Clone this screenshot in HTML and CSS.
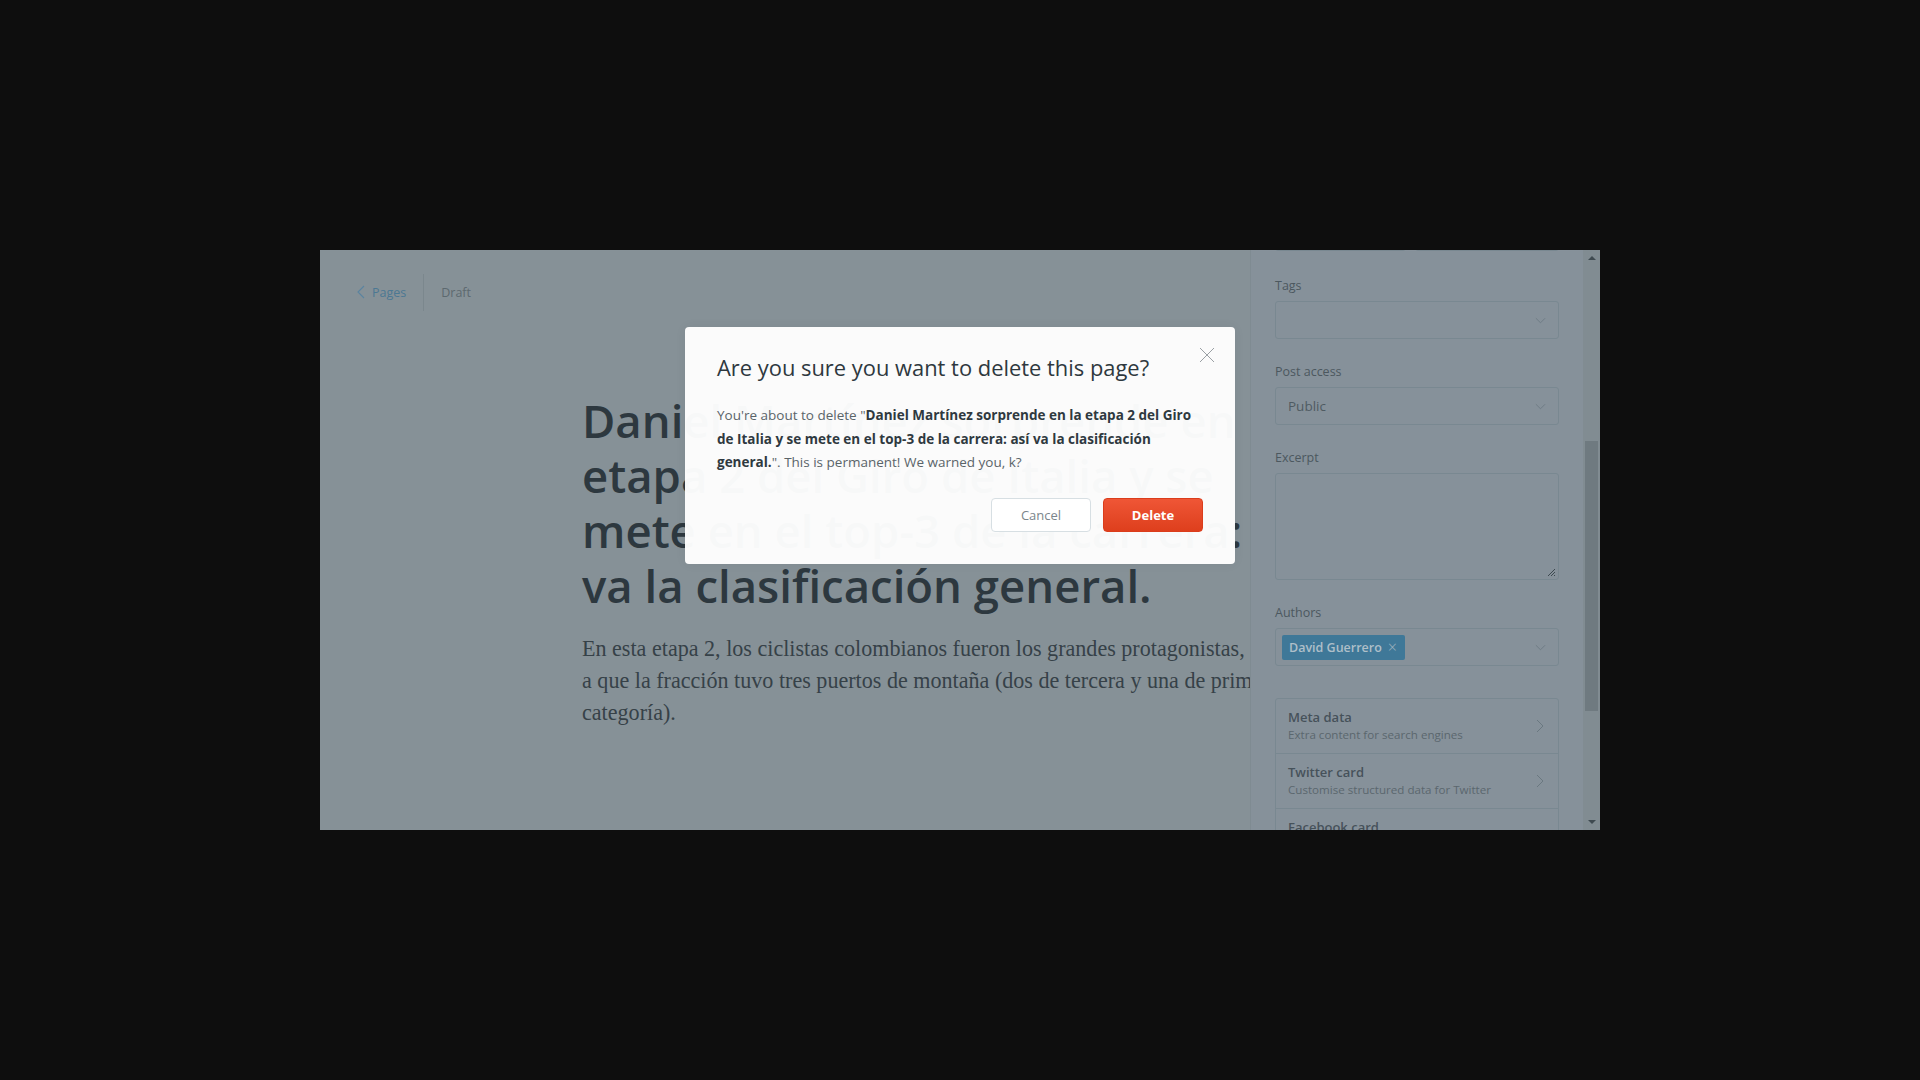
FILE: index.html
```html
<!DOCTYPE html>
<html lang="es">
<head>
<meta charset="utf-8">
<title>Delete page</title>
<link rel="stylesheet" href="styles.css">
</head>
<body>
<div class="stage">
  <div class="window">
    <main class="editor">
      <nav class="crumbs">
        <a class="crumb-back" href="#">
          <svg class="crumb-chevron" viewBox="0 0 8 14" width="8" height="14"><path d="M7 1 1 7l6 6" fill="none" stroke="currentColor" stroke-width="1.1"/></svg>
          Pages
        </a>
        <span class="crumb-sep"></span>
        <span class="crumb-status">Draft</span>
      </nav>
      <article class="post">
        <h1 class="post-title">Daniel Martínez sorprende en la etapa 2 del Giro de Italia y se mete en el top-3 de la carrera: así va la clasificación general.</h1>
        <p class="post-body">En esta etapa 2, los ciclistas colombianos fueron los grandes protagonistas, debido a que la fracción tuvo tres puertos de montaña (dos de tercera y una de primera categoría).</p>
      </article>
    </main>

    <aside class="settings">
      <div class="settings-scroll">
        <div class="date-row">
          <div class="input input-date"></div>
          <div class="input input-time"></div>
        </div>

        <div class="field">
          <label class="field-label">Tags</label>
          <div class="input select">
            <span class="select-value"></span>
            <svg class="select-caret" viewBox="0 0 12 7" width="11" height="7"><path d="M1 1l5 5 5-5" fill="none" stroke="currentColor" stroke-width="1"/></svg>
          </div>
        </div>

        <div class="field">
          <label class="field-label">Post access</label>
          <div class="input select">
            <span class="select-value">Public</span>
            <svg class="select-caret" viewBox="0 0 12 7" width="11" height="7"><path d="M1 1l5 5 5-5" fill="none" stroke="currentColor" stroke-width="1"/></svg>
          </div>
        </div>

        <div class="field">
          <label class="field-label">Excerpt</label>
          <div class="input textarea">
            <svg class="resize-grip" viewBox="0 0 9 9" width="9" height="9"><path d="M8 1 1 8M8 4 4 8M8 7 7 8" fill="none" stroke="currentColor" stroke-width="1"/></svg>
          </div>
        </div>

        <div class="field">
          <label class="field-label">Authors</label>
          <div class="input select authors">
            <span class="chip">David Guerrero <span class="chip-x">×</span></span>
            <svg class="select-caret" viewBox="0 0 12 7" width="11" height="7"><path d="M1 1l5 5 5-5" fill="none" stroke="currentColor" stroke-width="1"/></svg>
          </div>
        </div>

        <ul class="nav-list">
          <li class="nav-item">
            <div class="nav-text">
              <span class="nav-title">Meta data</span>
              <span class="nav-sub">Extra content for search engines</span>
            </div>
            <svg class="nav-arrow" viewBox="0 0 8 14" width="8" height="14"><path d="M1 1l6 6-6 6" fill="none" stroke="currentColor" stroke-width="1"/></svg>
          </li>
          <li class="nav-item">
            <div class="nav-text">
              <span class="nav-title">Twitter card</span>
              <span class="nav-sub">Customise structured data for Twitter</span>
            </div>
            <svg class="nav-arrow" viewBox="0 0 8 14" width="8" height="14"><path d="M1 1l6 6-6 6" fill="none" stroke="currentColor" stroke-width="1"/></svg>
          </li>
          <li class="nav-item">
            <div class="nav-text">
              <span class="nav-title">Facebook card</span>
              <span class="nav-sub">Customise Open Graph data</span>
            </div>
            <svg class="nav-arrow" viewBox="0 0 8 14" width="8" height="14"><path d="M1 1l6 6-6 6" fill="none" stroke="currentColor" stroke-width="1"/></svg>
          </li>
        </ul>
      </div>
      <div class="scrollbar">
        <span class="sb-arrow sb-up"></span>
        <div class="sb-track"><div class="sb-thumb"></div></div>
        <span class="sb-arrow sb-down"></span>
      </div>
    </aside>

    <div class="overlay">
      <div class="modal" role="dialog">
        <button class="modal-close" aria-label="Close">
          <svg viewBox="0 0 16 16" width="16" height="16"><path d="M1 1l14 14M15 1 1 15" fill="none" stroke="currentColor" stroke-width="1"/></svg>
        </button>
        <h2 class="modal-title">Are you sure you want to delete this page?</h2>
        <p class="modal-body">You're about to delete "<strong>Daniel Martínez sorprende en la etapa 2 del Giro de Italia y se mete en el top-3 de la carrera: así va la clasificación general.</strong>". This is permanent! We warned you, k?</p>
        <div class="modal-actions">
          <button class="btn btn-cancel">Cancel</button>
          <button class="btn btn-delete">Delete</button>
        </div>
      </div>
    </div>
  </div>
</div>
</body>
</html>
```

FILE: styles.css
```css
* { box-sizing: border-box; }

html, body {
  margin: 0;
  padding: 0;
}

body {
  background: #0e0e0e;
  font-family: "Open Sans", "Noto Sans", sans-serif;
}

.stage {
  height: 1080px;
  display: flex;
  align-items: center;
  justify-content: center;
}

.window {
  position: relative;
  width: 1280px;
  height: 580px;
  overflow: hidden;
  display: flex;
  background: #869197;
}

/* ---------- editor ---------- */
.editor {
  flex: 0 0 930px;
  width: 930px;
  background: #869197;
  position: relative;
}

.crumbs {
  display: flex;
  align-items: center;
  height: 38px;
  margin-top: 23px;
  padding-left: 37px;
}

.crumb-back {
  display: flex;
  align-items: center;
  gap: 7px;
  color: #4c7893;
  text-decoration: none;
  font-size: 12.5px;
  padding-right: 17px;
}

.crumb-chevron { color: #5a84a0; }

.crumb-sep {
  width: 1px;
  height: 37px;
  background: #7b878d;
}

.crumb-status {
  color: #5d696f;
  font-size: 12.5px;
  padding-left: 17px;
}

.post {
  width: 740px;
  margin-left: 262px;
  margin-top: 82px;
}

.post-title {
  margin: 0;
  width: 755px;
  font-size: 45.5px;
  line-height: 55px;
  font-weight: 600;
  letter-spacing: 0;
  color: #2d383f;
}

.post-body {
  margin: 20px 0 0;
  font-family: "Liberation Serif", "Times New Roman", serif;
  font-size: 22.1px;
  line-height: 32px;
  color: #364148;
}

/* ---------- settings sidebar ---------- */
.settings {
  position: relative;
  z-index: 1;
  flex: 0 0 350px;
  display: flex;
  background: #86919a;
  border-left: 1px solid #7f8b92;
}

.settings-scroll {
  flex: 1;
  padding: 0 24px;
}

.date-row {
  display: flex;
  gap: 9px;
  margin-top: -37px;
  margin-bottom: 26px;
}

.input {
  height: 38px;
  border: 1px solid #798891;
  border-radius: 3px;
}

.input-date { flex: 0 0 131px; }
.input-time { flex: 1; }

.field { margin-bottom: 24px; }

.field-label {
  display: block;
  font-size: 12.5px;
  line-height: 18px;
  color: #4c585f;
  margin-bottom: 6px;
}

.select {
  display: flex;
  align-items: center;
  padding: 0 12px;
}

.select-value {
  flex: 1;
  font-size: 13.5px;
  color: #4f5b62;
}

.select-caret {
  color: #6d7b83;
}

.textarea {
  height: 107px;
  position: relative;
}

.resize-grip {
  position: absolute;
  right: 2px;
  bottom: 2px;
  color: #3d4950;
}

.authors { padding-left: 6px; }

.chip {
  display: inline-flex;
  align-items: center;
  gap: 6px;
  height: 25px;
  padding: 0 8px 0 7px;
  background: #3f7898;
  border-radius: 2px;
  color: #aebfc9;
  font-size: 12.5px;
  font-weight: 600;
  margin-right: auto;
}

.chip-x {
  font-weight: 300;
  font-size: 16px;
  color: #9fb3bf;
}

.nav-list {
  list-style: none;
  margin: 32px 0 0;
  padding: 0;
  border: 1px solid #798891;
  border-radius: 3px;
}

.nav-item {
  display: flex;
  align-items: center;
  height: 55px;
  padding: 0 12px 0 12px;
  border-bottom: 1px solid #798891;
}

.nav-text {
  flex: 1;
  display: flex;
  flex-direction: column;
}

.nav-title {
  font-size: 13px;
  font-weight: 600;
  color: #46525a;
  line-height: 17px;
}

.nav-sub {
  font-size: 11.6px;
  color: #5b676e;
  line-height: 17px;
}

.nav-arrow { color: #6a7880; margin-right: 2px; }

/* fake classic scrollbar */
.scrollbar {
  flex: 0 0 17px;
  display: flex;
  flex-direction: column;
  align-items: center;
  background: #818c92;
}

.sb-arrow {
  flex: 0 0 17px;
  width: 17px;
  position: relative;
}

.sb-arrow::after {
  content: "";
  position: absolute;
  left: 5px;
  width: 0;
  height: 0;
  border-left: 4px solid transparent;
  border-right: 4px solid transparent;
}

.sb-up::after { top: 6px; border-bottom: 4px solid #3f4a50; }
.sb-down::after { top: 7px; border-top: 4px solid #3f4a50; }

.sb-track {
  flex: 1;
  width: 100%;
  padding: 174px 2px 0;
}

.sb-thumb {
  height: 270px;
  background: #6f7a80;
}

/* ---------- modal ---------- */
.overlay {
  position: absolute;
  inset: 0;
  z-index: 5;
  display: flex;
  justify-content: center;
  align-items: flex-start;
  padding-top: 77px;
}

.modal {
  position: relative;
  width: 550px;
  background: rgba(255, 255, 255, 0.965);
  border-radius: 4px;
  padding: 27px 32px 32px;
  box-shadow: 0 0 12px rgba(0, 0, 0, 0.05);
}

.modal-close {
  position: absolute;
  top: 20px;
  right: 20px;
  padding: 0;
  border: 0;
  background: none;
  color: #9aa0a4;
  width: 16px;
  height: 16px;
}

.modal-close svg { display: block; }

.modal-title {
  margin: 0;
  font-size: 21.9px;
  line-height: 28px;
  font-weight: 400;
  color: #2e383e;
}

.modal-body {
  margin: 22px 0 0;
  font-size: 13.5px;
  line-height: 23.5px;
  color: #5a6469;
}

.modal-body strong {
  color: #2f393f;
  font-weight: 700;
}

.modal-actions {
  display: flex;
  justify-content: flex-end;
  gap: 12px;
  margin-top: 23px;
}

.btn {
  width: 100px;
  height: 34px;
  border-radius: 4px;
  font-family: inherit;
  font-size: 13px;
  cursor: pointer;
}

.btn-cancel {
  background: #fff;
  border: 1px solid #d7dfe3;
  color: #7b858b;
}

.btn-delete {
  background: linear-gradient(#ef5636, #de3f1d);
  border: 1px solid #db3d1c;
  color: #fff;
  font-weight: 700;
}
```
